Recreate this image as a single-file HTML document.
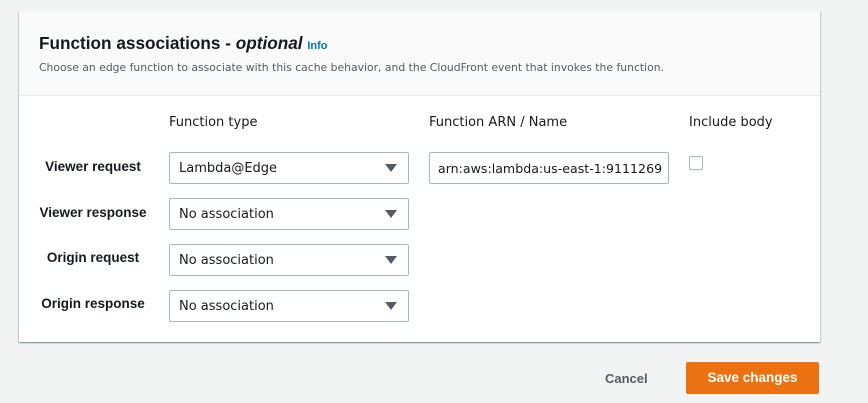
<!DOCTYPE html>
<html><head><style>
*{box-sizing:border-box;margin:0;padding:0}
body{width:868px;height:403px;background:#f2f3f3;font-family:"Liberation Sans","DejaVu Sans",sans-serif;color:#16191f;position:relative;overflow:hidden}
.panel{position:absolute;left:19px;top:11px;width:801px;height:331px;background:#fff;box-shadow:0 1px 1px rgba(0,28,36,.3),1px 1px 1px rgba(0,28,36,.15),-1px 1px 1px rgba(0,28,36,.15)}
.head{position:absolute;left:0;top:0;width:801px;height:85px;background:#fafafa;border-bottom:1px solid #eaeded}
h2{position:absolute;left:20px;top:22px;font-size:17.2px;font-weight:bold;white-space:nowrap}
h2 i{font-weight:bold}
h2 .info{font-size:11px;color:#0073bb;font-weight:bold;font-style:normal}
.sub{position:absolute;left:20px;top:50px;font-size:10.8px;color:#545b64;white-space:nowrap;font-family:"DejaVu Sans",sans-serif}
.t{position:absolute;font-size:13px;white-space:nowrap;font-family:"DejaVu Sans",sans-serif}
.lab{position:absolute;font-size:13.5px;font-weight:bold;width:108px;left:20px;text-align:center;white-space:nowrap}
.sel{position:absolute;left:150px;width:240px;height:32px;border:1px solid #aab7b8;border-radius:2px;font-size:13px;padding:8px 9px;background:#fff;font-family:"DejaVu Sans",sans-serif}
.sel:after{content:"";position:absolute;right:11px;top:11px;border-left:6px solid transparent;border-right:6px solid transparent;border-top:8px solid #545b64}
.inp{position:absolute;left:410px;top:141px;width:240px;height:32px;border:1px solid #aab7b8;border-radius:2px;font-size:12.6px;padding:8px 8px;white-space:nowrap;overflow:hidden;font-family:"DejaVu Sans",sans-serif}
.cb{position:absolute;left:670px;top:145px;width:14px;height:14px;border:1px solid #aab7b8;border-radius:2px}
.cancel{position:absolute;left:605px;top:371px;font-size:13px;font-weight:bold;color:#545b64}
.save{position:absolute;left:686px;top:362px;width:133px;height:32px;background:#ec7211;border-radius:2px;color:#fff;font-size:13.5px;font-weight:bold;text-align:center;line-height:32px}
</style></head><body>
<div class="panel">
<div class="head">
<h2>Function associations - <i>optional</i> <span class="info">Info</span></h2>
<div class="sub">Choose an edge function to associate with this cache behavior, and the CloudFront event that invokes the function.</div>
</div>
<div class="t" style="left:150px;top:104px">Function type</div>
<div class="t" style="left:410px;top:104px">Function ARN / Name</div>
<div class="t" style="left:670px;top:104px">Include body</div>
<div class="lab" style="top:148px">Viewer request</div>
<div class="lab" style="top:194px">Viewer response</div>
<div class="lab" style="top:239px">Origin request</div>
<div class="lab" style="top:285px">Origin response</div>
<div class="sel" style="top:141px">Lambda@Edge</div>
<div class="sel" style="top:187px">No association</div>
<div class="sel" style="top:233px">No association</div>
<div class="sel" style="top:279px">No association</div>
<div class="inp">arn:aws:lambda:us-east-1:9111269</div>
<div class="cb"></div>
</div>
<div class="cancel">Cancel</div>
<div class="save">Save changes</div>
</body></html>
